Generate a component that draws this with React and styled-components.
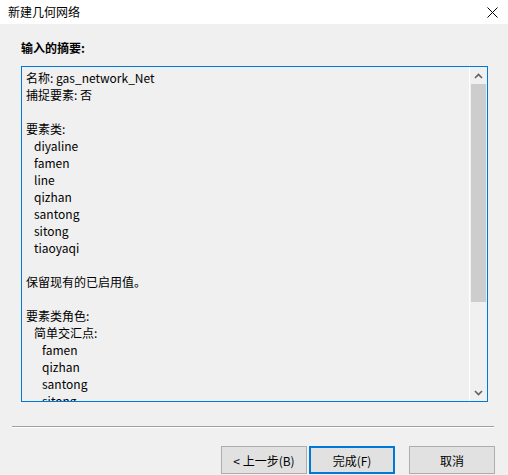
import React from 'react';
import styled, { createGlobalStyle } from 'styled-components';

const GlobalStyle = createGlobalStyle`
  html, body {
    margin: 0;
    padding: 0;
    background: #f0f0f0;
  }
  body {
    font-family: "Noto Sans CJK SC", "Liberation Sans", sans-serif;
    font-size: 12px;
    color: #000;
  }
`;

const Dialog = styled.div`
  width: 508px;
  height: 475px;
  background: #f0f0f0;
  display: flex;
  flex-direction: column;
  overflow: hidden;
`;

const TitleBar = styled.div`
  height: 24px;
  background: #fff;
  display: flex;
  align-items: center;
  justify-content: space-between;
  padding: 0 10px 0 8px;
  box-sizing: border-box;
  font-size: 12px;
  line-height: 16px;
`;

const Body = styled.div`
  flex: 1;
  display: flex;
  flex-direction: column;
  padding: 16px 0 0 21px;
`;

const Heading = styled.div`
  font-weight: bold;
  font-size: 12px;
  line-height: 16px;
  height: 16px;
  margin-bottom: 10px;
`;

const SummaryBox = styled.div`
  width: 467px;
  height: 336px;
  box-sizing: border-box;
  border: 1px solid #0078d7;
  display: flex;
  background: #f0f0f0;
`;

const TextArea = styled.div`
  flex: 1;
  padding: 2px 0 0 4px;
  overflow: hidden;
  white-space: pre;
  font-size: 12px;
  line-height: 17px;
`;

const Line = styled.div`
  height: 17px;
  padding-left: ${(p) => p.indent * 8}px;
`;

const ScrollBar = styled.div`
  width: 17px;
  border-left: 1px solid #fff;
  display: flex;
  flex-direction: column;
  background: #f0f0f0;
`;

const ArrowBtn = styled.div`
  height: 17px;
  display: flex;
  align-items: center;
  justify-content: center;
`;

const Track = styled.div`
  flex: 1;
  display: flex;
  flex-direction: column;
`;

const Thumb = styled.div`
  height: 218px;
  margin: 0 1px;
  background: #cdcdcd;
`;

const Separator = styled.div`
  margin: 24px 0 0 -9px;
  width: 482px;
  height: 1px;
  background: #a0a0a0;
  border-bottom: 1px solid #fff;
`;

const ButtonRow = styled.div`
  display: flex;
  margin: 18px 0 0 200px;
`;

const Button = styled.div`
  width: ${(p) => p.w}px;
  height: 28px;
  box-sizing: border-box;
  background: #e1e1e1;
  border: ${(p) => (p.primary ? '2px solid #0078d7' : '1px solid #adadad')};
  display: flex;
  align-items: center;
  justify-content: center;
  margin-left: ${(p) => p.gap || 0}px;
  font-size: 12px;
`;

const lines = [
  ['名称: gas_network_Net', 0],
  ['捕捉要素: 否', 0],
  ['', 0],
  ['要素类:', 0],
  ['diyaline', 1],
  ['famen', 1],
  ['line', 1],
  ['qizhan', 1],
  ['santong', 1],
  ['sitong', 1],
  ['tiaoyaqi', 1],
  ['', 0],
  ['保留现有的已启用值。', 0],
  ['', 0],
  ['要素类角色:', 0],
  ['简单交汇点:', 1],
  ['famen', 2],
  ['qizhan', 2],
  ['santong', 2],
  ['sitong', 2],
];

const App = () => {
  return (
    <>
      <GlobalStyle />
      <Dialog>
        <TitleBar>
          <span>新建几何网络</span>
          <svg width="11" height="11" viewBox="0 0 11 11">
            <path d="M0.5 0.5 L10.5 10.5 M10.5 0.5 L0.5 10.5" stroke="#000" strokeWidth="1" />
          </svg>
        </TitleBar>
        <Body>
          <Heading>输入的摘要:</Heading>
          <SummaryBox>
            <TextArea>
              {lines.map(([t, i], k) => (
                <Line key={k} indent={i}>{t}</Line>
              ))}
            </TextArea>
            <ScrollBar>
              <ArrowBtn>
                <svg width="9" height="6" viewBox="0 0 9 6">
                  <path d="M1 5 L4.5 1.5 L8 5" fill="none" stroke="#606060" strokeWidth="1.6" />
                </svg>
              </ArrowBtn>
              <Track>
                <Thumb />
              </Track>
              <ArrowBtn>
                <svg width="9" height="6" viewBox="0 0 9 6">
                  <path d="M1 1 L4.5 4.5 L8 1" fill="none" stroke="#606060" strokeWidth="1.6" />
                </svg>
              </ArrowBtn>
            </ScrollBar>
          </SummaryBox>
          <Separator />
          <ButtonRow>
            <Button w={86}>&lt; 上一步(B)</Button>
            <Button w={86} gap={2} primary>完成(F)</Button>
            <Button w={86} gap={14}>取消</Button>
          </ButtonRow>
        </Body>
      </Dialog>
    </>
  );
};

export default App;
